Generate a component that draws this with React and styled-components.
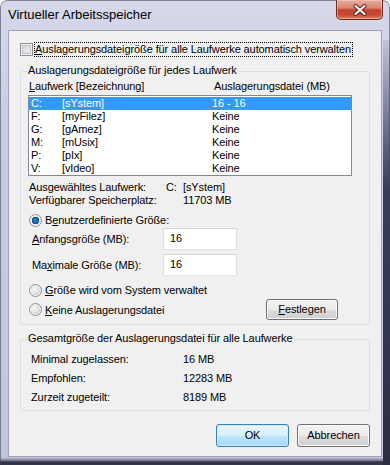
import React from 'react';
import styled, { createGlobalStyle } from 'styled-components';

const Global = createGlobalStyle`
  html, body { margin: 0; padding: 0; background: #ffffff; }
  * { box-sizing: border-box; }
`;

const Window = styled.div`
  position: relative;
  width: 390px;
  height: 465px;
  display: flex;
  flex-direction: column;
  overflow: hidden;
  border-radius: 7px 7px 0 0;
  font-family: "Liberation Sans", Arial, sans-serif;
  font-size: 11px;
  letter-spacing: -0.1px;
  color: #000;
  background:
    linear-gradient(to bottom, transparent 458px, #b4b6ca 458px, #8a8ca6 460px, #34364c 462px, #2b2d40 465px),
    linear-gradient(to bottom, #d6d8ea 0%, #c9cce0 30%, #c2c5da 100%);
  box-shadow: inset 0 0 0 1px rgba(60, 62, 90, 0.55);
  &::after {
    content: "";
    position: absolute;
    right: 0;
    top: 40px;
    bottom: 0;
    width: 7px;
    background: linear-gradient(to bottom, rgba(50, 52, 78, 0.1), #3a3d58 35%, #2c2e45 100%);
  }
`;

const TitleBar = styled.div`
  flex: none;
  height: 30px;
  display: flex;
  align-items: flex-start;
  padding-left: 8px;
`;

const Title = styled.div`
  font-size: 13px;
  line-height: 30px;
  letter-spacing: 0;
  color: #000;
`;

const CloseButton = styled.div`
  margin-left: auto;
  margin-right: 7px;
  width: 47px;
  height: 20px;
  border: 1px solid #6a2a22;
  border-top: none;
  border-radius: 0 0 5px 5px;
  background: linear-gradient(to bottom, #e9ab9c 0%, #d98472 42%, #c3432d 52%, #c44a33 78%, #dc8160 100%);
  box-shadow: inset 0 0 0 1px rgba(255, 220, 210, 0.45);
  display: flex;
  align-items: center;
  justify-content: center;
`;

const Client = styled.div`
  flex: 1;
  margin: 0 8px 8px 8px;
  background: #f0f0f0;
  border: 1px solid #9ea1b7;
  display: flex;
  flex-direction: column;
  padding: 11px 11px 0 11px;
`;

const CheckRow = styled.div`
  height: 15px;
  display: flex;
  align-items: center;
`;

const CheckBox = styled.span`
  width: 13px;
  height: 13px;
  margin-right: 1px;
  border: 1px solid #8e8f8f;
  background: #f4f4f4;
  box-shadow: inset 0 0 0 1px #f4f4f4, inset 0 0 0 2px #bfc3c9;
  background-image: linear-gradient(135deg, #cdd1d7 0%, #f3f4f6 100%);
`;

const FocusLabel = styled.span`
  border: 1px dotted #000;
  line-height: 13px;
  padding: 0 1px 0 0;
`;

const Group = styled.fieldset`
  margin: ${(p) => p.$mt}px 0 0 0;
  padding: 0 8px ${(p) => p.$pb}px 8px;
  border: 1px solid #d5dfe5;
  border-radius: 3px;
  min-width: 0;
`;

const Legend = styled.legend`
  margin-left: -2px;
  padding: 0 2px 2px 1px;
  line-height: 15px;
`;

const HeaderRow = styled.div`
  display: grid;
  grid-template-columns: 185px auto;
  line-height: 13px;
`;

const ListBox = styled.div`
  margin: 2px 0 0 -1px;
  width: 324px;
  border: 1px solid #828790;
  background: #ffffff;
  padding-top: 1px;
`;

const ListRow = styled.div`
  display: grid;
  grid-template-columns: 31px 150px 1fr;
  height: 13px;
  line-height: 13px;
  padding-left: 2px;
  background: ${(p) => (p.$selected ? '#3399ff' : 'transparent')};
  color: ${(p) => (p.$selected ? '#ffffff' : '#000000')};
`;

const InfoGrid = styled.div`
  margin-top: 5px;
  display: grid;
  grid-template-columns: 137px 17px auto;
  line-height: 13px;
`;

const RadioRow = styled.div`
  margin-top: ${(p) => p.$mt}px;
  height: ${(p) => p.$h || 14}px;
  display: flex;
  align-items: center;
`;

const Radio = styled.span`
  width: 13px;
  height: 13px;
  margin-right: 3px;
  border-radius: 50%;
  border: 1px solid #8f9091;
  flex: none;
  background: ${(p) =>
    p.$checked
      ? 'radial-gradient(circle at 50% 50%, #2a8ad4 0, #1a64ad 2.5px, #0f4f93 3.5px, #e6e6e6 4px, #f6f6f6 6px)'
      : 'radial-gradient(circle at 40% 40%, #f7f7f7 0, #e3e3e3 4px, #c9cacb 6px)'};
  box-shadow: inset 0 0 0 1px #f4f4f4;
`;

const FieldRow = styled.div`
  margin-top: ${(p) => p.$mt}px;
  height: 22px;
  display: flex;
  align-items: center;
`;

const FieldLabel = styled.span`
  width: 134px;
  padding-left: 3px;
`;

const Input = styled.div`
  width: 74px;
  height: 22px;
  border: 1px solid #e2e3e7;
  border-top-color: #d2d4d9;
  background: #ffffff;
  padding: 3px 0 0 6px;
  font-size: 11px;
`;

const Button = styled.div`
  width: ${(p) => p.$w}px;
  height: ${(p) => p.$h}px;
  border: 1px solid ${(p) => (p.$default ? '#3c7fb1' : '#707070')};
  border-radius: 3px;
  display: flex;
  align-items: center;
  justify-content: center;
  padding-bottom: 1px;
  background: ${(p) =>
    p.$default
      ? 'linear-gradient(to bottom, #eaf6fd 0%, #d9f0fc 50%, #bee6fd 51%, #a7d9f5 100%)'
      : 'linear-gradient(to bottom, #f2f2f2 0%, #ebebeb 50%, #dddddd 51%, #cfcfcf 100%)'};
  box-shadow: inset 0 0 0 1px ${(p) => (p.$default ? '#c9ebfc' : '#fbfbfb')};
`;

const FestlegenButton = styled(Button)`
  margin-left: auto;
  margin-right: 23px;
`;

const TotalGrid = styled.div`
  margin-top: 5px;
  padding-left: 2px;
  display: grid;
  grid-template-columns: 152px auto;
  row-gap: 6px;
  line-height: 13px;
`;

const ButtonBar = styled.div`
  margin-top: 13px;
  display: flex;
  justify-content: flex-end;
  gap: 8px;
`;

const drives = [
  ['C:', '[sYstem]', '16 - 16', true],
  ['F:', '[myFilez]', 'Keine'],
  ['G:', '[gAmez]', 'Keine'],
  ['M:', '[mUsix]', 'Keine'],
  ['P:', '[pIx]', 'Keine'],
  ['V:', '[vIdeo]', 'Keine'],
];

function CloseIcon() {
  return (
    <svg width="14" height="12" viewBox="0 0 14 12">
      <path d="M2.5 2 L11.5 10 M11.5 2 L2.5 10" stroke="#5a1a14" strokeWidth="4" strokeLinecap="round" />
      <path d="M2.5 2 L11.5 10 M11.5 2 L2.5 10" stroke="#ffffff" strokeWidth="2.2" strokeLinecap="round" />
    </svg>
  );
}

export default function App() {
  return (
    <>
      <Global />
      <Window>
        <TitleBar>
          <Title>Virtueller Arbeitsspeicher</Title>
          <CloseButton>
            <CloseIcon />
          </CloseButton>
        </TitleBar>
        <Client>
          <CheckRow>
            <CheckBox />
            <FocusLabel>
              <u>A</u>uslagerungsdateigröße für alle Laufwerke automatisch verwalten
            </FocusLabel>
          </CheckRow>

          <Group $mt={6} $pb={4}>
            <Legend>Auslagerungsdateigröße für jedes Laufwerk</Legend>
            <HeaderRow>
              <span>
                <u>L</u>aufwerk [Bezeichnung]
              </span>
              <span>Auslagerungsdatei (MB)</span>
            </HeaderRow>
            <ListBox>
              {drives.map(([d, n, v, sel]) => (
                <ListRow key={d} $selected={sel}>
                  <span>{d}</span>
                  <span>{n}</span>
                  <span>{v}</span>
                </ListRow>
              ))}
            </ListBox>
            <InfoGrid>
              <span>Ausgewähltes Laufwerk:</span>
              <span>C:</span>
              <span>[sYstem]</span>
              <span>Verfügbarer Speicherplatz:</span>
              <span />
              <span>11703 MB</span>
            </InfoGrid>
            <RadioRow $mt={6}>
              <Radio $checked />
              <span>
                B<u>e</u>nutzerdefinierte Größe:
              </span>
            </RadioRow>
            <FieldRow $mt={1}>
              <FieldLabel>
                <u>A</u>nfangsgröße (MB):
              </FieldLabel>
              <Input>16</Input>
            </FieldRow>
            <FieldRow $mt={4}>
              <FieldLabel>
                Ma<u>x</u>imale Größe (MB):
              </FieldLabel>
              <Input>16</Input>
            </FieldRow>
            <RadioRow $mt={7}>
              <Radio />
              <span>
                <u>G</u>röße wird vom System verwaltet
              </span>
            </RadioRow>
            <RadioRow $mt={2} $h={21}>
              <Radio />
              <span>
                <u>K</u>eine Auslagerungsdatei
              </span>
              <FestlegenButton $w={72} $h={21}>
                <span>
                  <u>F</u>estlegen
                </span>
              </FestlegenButton>
            </RadioRow>
          </Group>

          <Group $mt={6} $pb={6}>
            <Legend>Gesamtgröße der Auslagerungsdatei für alle Laufwerke</Legend>
            <TotalGrid>
              <span>Minimal zugelassen:</span>
              <span>16 MB</span>
              <span>Empfohlen:</span>
              <span>12283 MB</span>
              <span>Zurzeit zugeteilt:</span>
              <span>8189 MB</span>
            </TotalGrid>
          </Group>

          <ButtonBar>
            <Button $default $w={73} $h={23}>
              OK
            </Button>
            <Button $w={73} $h={23}>
              Abbrechen
            </Button>
          </ButtonBar>
        </Client>
      </Window>
    </>
  );
}
